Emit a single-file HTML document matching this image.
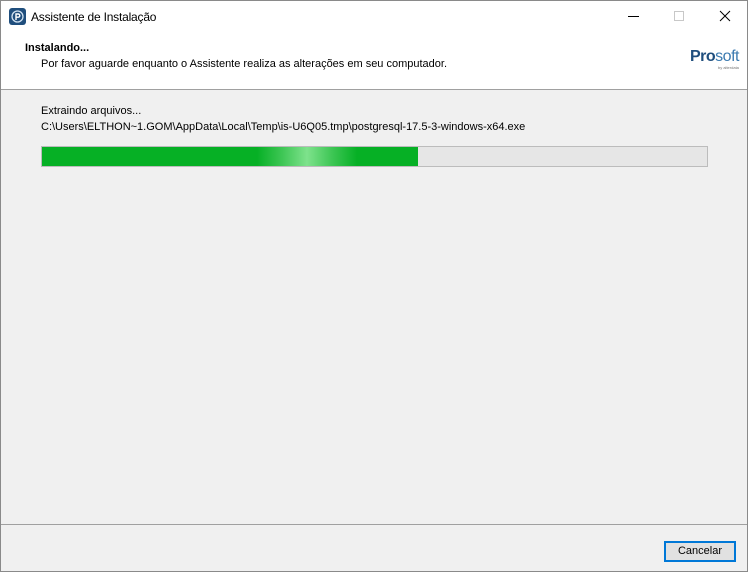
<!DOCTYPE html>
<html><head><meta charset="utf-8"><style>
*{margin:0;padding:0;box-sizing:border-box}
body{width:748px;height:572px;overflow:hidden;font-family:"Liberation Sans",sans-serif;font-size:11px;color:#000;background:#f0f0f0;position:relative}
.win{position:absolute;left:0;top:0;width:748px;height:572px;border:1px solid #8a8a8a;background:#f0f0f0}
.title{position:absolute;left:0;top:0;width:746px;height:31px;background:#fff}
.hdr{position:absolute;left:0;top:31px;width:746px;height:58px;background:#fff;border-bottom:1px solid #a0a0a0}
.t{position:absolute;white-space:nowrap}
.bar{position:absolute;left:40px;top:145px;width:667px;height:21px;background:#e6e6e6;border:1px solid #bcbcbc}
.fill{position:absolute;left:0;top:0;width:376px;height:19px;background:linear-gradient(90deg,#06b025 0,#06b025 215px,#3ec655 240px,#7ee28c 265px,#3ec655 290px,#06b025 315px)}
.sep{position:absolute;left:0;top:523px;width:746px;height:1px;background:#a0a0a0}
.btn{position:absolute;left:663px;top:540px;width:72px;height:21px;border:2px solid #0078d7;background:#e1e1e1;text-align:center;line-height:17px}
</style></head><body>
<div class="win">
<div class="title">
 <svg style="position:absolute;left:8px;top:7px" width="17" height="17" viewBox="0 0 17 17"><rect width="17" height="17" rx="3" fill="#1f4e7d"/><circle cx="8.5" cy="8.5" r="5.5" fill="none" stroke="#cfe0f0" stroke-width="1.3"/><path d="M7 12V6h2.2a1.6 1.6 0 0 1 0 3.2H7" fill="none" stroke="#fff" stroke-width="1.4"/></svg>
 <div class="t" style="left:30px;top:9px;font-size:12px;letter-spacing:-0.2px">Assistente de Instalação</div>
 <div style="position:absolute;left:627px;top:15px;width:11px;height:1px;background:#000"></div>
 <div style="position:absolute;left:673px;top:10px;width:10px;height:10px;border:1px solid #c8c8c8"></div>
 <svg style="position:absolute;left:718px;top:9px" width="12" height="12"><path d="M1 1L11 11M11 1L1 11" stroke="#000" stroke-width="1"/></svg>
</div>
<div class="hdr">
 <div class="t" style="left:24px;top:10px;font-weight:bold">Instalando...</div>
 <div class="t" style="left:40px;top:26px">Por favor aguarde enquanto o Assistente realiza as alterações em seu computador.</div>
 <div class="t" style="left:689px;top:16px;font-size:16px;color:#1f4e7d;letter-spacing:-0.5px"><b>Pro</b><span style="color:#3b7ab0">soft</span></div>
 <div class="t" style="left:717px;top:33px;font-size:4px;color:#777">by alterdata</div>
</div>
<div class="t" style="left:40px;top:104px">Extraindo arquivos...</div>
<div class="t" style="left:40px;top:120px">C:\Users\ELTHON~1.GOM\AppData\Local\Temp\is-U6Q05.tmp\postgresql-17.5-3-windows-x64.exe</div>
<div class="bar"><div class="fill"></div></div>
<div class="sep"></div>
<div class="btn">Cancelar</div>
</div>
</body></html>
